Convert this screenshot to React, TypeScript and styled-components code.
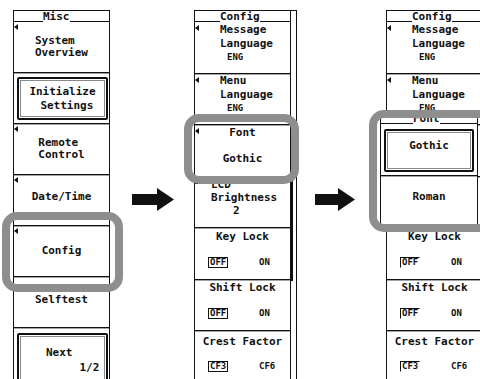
import React from "react";
import styled, { createGlobalStyle } from "styled-components";

const GlobalStyle = createGlobalStyle`
  html, body {
    margin: 0;
    padding: 0;
    background: #fff;
    overflow: hidden;
  }
`;

const Page = styled.div`
  display: flex;
  align-items: flex-start;
  width: 480px;
  height: 379px;
  padding-top: 10px;
  box-sizing: border-box;
  overflow: hidden;
  font-family: "DejaVu Sans Mono", "Liberation Mono", monospace;
  font-weight: bold;
  color: #111;
`;

const Column = styled.div<{ $ml: number }>`
  display: flex;
  flex-shrink: 0;
  margin-left: ${(p) => p.$ml}px;
`;

const Panel = styled.div`
  position: relative;
  width: 97px;
  height: 369px;
  flex-shrink: 0;
  box-sizing: border-box;
  border-left: 1px solid #111;
  border-right: 1px solid #111;
  display: flex;
  flex-direction: column;
`;

const Strip = styled.div`
  width: 6px;
  height: 369px;
  box-sizing: border-box;
  border-top: 1px solid #111;
  border-right: 1px solid #111;
  display: flex;
  flex-direction: column;
`;

const Thumb = styled.div<{ $top: number; $h: number }>`
  margin-top: ${(p) => p.$top}px;
  height: ${(p) => p.$h}px;
  width: 2px;
  background: #111;
`;

const HeaderBar = styled.div`
  height: 12px;
  flex-shrink: 0;
  box-sizing: border-box;
  border-top: 1px solid #111;
  display: flex;
  align-items: flex-end;
`;

const Rule = styled.div<{ $w?: number }>`
  ${(p) => (p.$w ? `width: ${p.$w}px;` : "flex: 1;")}
  border-bottom: 1px solid #111;
`;

const HeaderText = styled.div`
  font-size: 11px;
  line-height: 11px;
  white-space: pre;
`;

const Header: React.FC<{ lead: number; children: React.ReactNode }> = ({ lead, children }) => (
  <HeaderBar>
    <Rule $w={lead} />
    <HeaderText>{children}</HeaderText>
    <Rule />
  </HeaderBar>
);

const Item = styled.div<{ $h: number; $top?: boolean; $pad?: string; $last?: boolean }>`
  position: relative;
  height: ${(p) => p.$h}px;
  flex-shrink: 0;
  box-sizing: border-box;
  ${(p) => (p.$last ? "" : "border-bottom: 1px solid #111; box-shadow: 0 1px 0 #a4a4a4;")}
  display: flex;
  flex-direction: column;
  justify-content: ${(p) => (p.$top ? "flex-start" : "center")};
  padding: ${(p) => p.$pad ?? "0"};
`;

const Block = styled.div<{ $pl?: number }>`
  display: flex;
  flex-direction: column;
  align-self: ${(p) => (p.$pl !== undefined ? "flex-start" : "center")};
  padding-left: ${(p) => p.$pl ?? 0}px;
`;

const Line = styled.div<{ $lh?: number; $indent?: number; $align?: string; $mt?: number }>`
  font-size: 11px;
  line-height: ${(p) => p.$lh ?? 13}px;
  white-space: pre;
  text-align: ${(p) => p.$align ?? "left"};
  padding-left: ${(p) => p.$indent ?? 0}px;
  margin-top: ${(p) => p.$mt ?? 0}px;
`;

const Value = styled.span`
  font-size: 9px;
`;

const Pointer = styled.span<{ $top?: number }>`
  position: absolute;
  left: 0;
  top: ${(p) => p.$top ?? 2}px;
  width: 0;
  height: 0;
  border-top: 3.5px solid transparent;
  border-bottom: 3.5px solid transparent;
  border-right: 4px solid #111;
`;

const Knob = styled.svg`
  position: absolute;
  left: 0;
  top: 0;
`;

const Button = styled.div<{ $h?: number; $pt?: number }>`
  ${(p) => (p.$h ? `height: ${p.$h}px; flex: none;` : "flex: 1;")}
  box-sizing: border-box;
  border: 2px solid #111;
  border-radius: 2px;
  box-shadow: inset 0 0 0 1px #fff, inset 0 0 0 2px #8a8a8a;
  display: flex;
  flex-direction: column;
  justify-content: ${(p) => (p.$pt !== undefined ? "flex-start" : "center")};
  padding-top: ${(p) => p.$pt ?? 0}px;
`;

const ToggleRow = styled.div<{ $mt: number }>`
  display: grid;
  grid-template-columns: 51px auto;
  align-items: center;
  padding-left: 13px;
  margin-top: ${(p) => p.$mt}px;
`;

const Mark = styled.span<{ $flat?: boolean }>`
  justify-self: start;
  font-size: 9px;
  line-height: 9px;
  padding: 0 1px 0 1px;
  border: 1px solid ${(p) => (p.$flat ? "transparent" : "#111")};
  ${(p) => (p.$flat ? "border-top-color: #111; border-left-color: #111;" : "")}
`;

const Plain = styled.span`
  font-size: 9px;
  line-height: 9px;
`;

const Highlight = styled.div<{ $x: number; $y: number; $w: number; $h: number }>`
  position: absolute;
  left: ${(p) => p.$x}px;
  top: ${(p) => p.$y}px;
  width: ${(p) => p.$w}px;
  height: ${(p) => p.$h}px;
  box-sizing: border-box;
  border: 8px solid #8e8e8e;
  border-radius: 15px;
  pointer-events: none;
  z-index: 3;
`;

const SubMenu = styled.div`
  position: absolute;
  left: -7px;
  top: 102px;
  width: 98px;
  height: 114px;
  box-sizing: border-box;
  background: #fff;
  border-left: 1px solid #111;
  border-right: 1px solid #111;
  border-bottom: 1px solid #111;
  display: flex;
  flex-direction: column;
  z-index: 2;
`;

const ArrowBox = styled.div<{ $ml: number }>`
  flex-shrink: 0;
  margin-left: ${(p) => p.$ml}px;
  margin-top: 178px;
  line-height: 0;
`;

const Arrow: React.FC<{ ml: number; w: number }> = ({ ml, w }) => (
  <ArrowBox $ml={ml}>
    <svg width={w} height={23} viewBox={`0 0 ${w} 23`}>
      <path d={`M0 6H${w - 17}V0L${w} 11.5L${w - 17} 23V17H0Z`} fill="#111" />
    </svg>
  </ArrowBox>
);

const Toggle: React.FC<{ a: string; b: string; mt: number; flat?: boolean }> = ({ a, b, mt, flat }) => (
  <ToggleRow $mt={mt}>
    <Mark $flat={flat}>{a}</Mark>
    <Plain>{b}</Plain>
  </ToggleRow>
);

const MiscMenu = () => (
  <Panel>
    <Header lead={29}>Misc</Header>
    <Item $h={51}>
      <Pointer />
      <Block>
        <Line $lh={12}>System</Line>
        <Line $lh={12}>Overview</Line>
      </Block>
    </Item>
    <Item $h={51} $pad="4px 1px 3px 3px">
      <Button>
        <Block>
          <Line $lh={14}>Initialize</Line>
          <Line $lh={14} $indent={11}>Settings</Line>
        </Block>
      </Button>
    </Item>
    <Item $h={51}>
      <Pointer />
      <Block>
        <Line $lh={12}>Remote</Line>
        <Line $lh={12}>Control</Line>
      </Block>
    </Item>
    <Item $h={51} $pad="0 0 7px">
      <Pointer />
      <Line $align="center">Date/Time</Line>
    </Item>
    <Item $h={51} $pad="0 0 2px">
      <Pointer />
      <Line $align="center">Config</Line>
    </Item>
    <Item $h={51} $pad="0 0 6px">
      <Line $align="center">Selftest</Line>
    </Item>
    <Item $h={51} $top $last $pad="5px 1px 0 3px">
      <Button $h={60} $pt={11}>
        <Line $align="center">{"Next "}</Line>
        <Line $align="right" $mt={2}>
          {"1/2 "}
        </Line>
      </Button>
    </Item>
    <Highlight $x={-12} $y={202} $w={121} $h={80} />
  </Panel>
);

const ConfigMenu: React.FC<{ popup?: boolean }> = ({ popup }) => (
  <Panel>
    <Header lead={25}>Config</Header>
    <Item $h={52} $top $pad="1px 0 0">
      <Pointer $top={3} />
      <Block $pl={25}>
        <Line $lh={13.5}>Message</Line>
        <Line $lh={13.5}>Language</Line>
        <Line $lh={13.5} $indent={7}>
          <Value>ENG</Value>
        </Line>
      </Block>
    </Item>
    <Item $h={51} $top $pad="0 0 0">
      <Pointer $top={3} />
      <Block $pl={25}>
        <Line $lh={13.5}>Menu</Line>
        <Line $lh={13.5}>Language</Line>
        <Line $lh={13.5} $indent={7}>
          <Value>ENG</Value>
        </Line>
      </Block>
    </Item>
    {popup ? (
      <>
        <Item $h={52} />
        <Item $h={51} />
      </>
    ) : (
      <>
        <Item $h={52} $top $pad="1px 0 0">
          <Pointer $top={3} />
          <Line $align="center">Font</Line>
          <Line $align="center" $mt={13}>
            Gothic
          </Line>
        </Item>
        <Item $h={51} $top $pad="1px 0 0">
          <Knob width={11} height={7} viewBox="0 0 11 7">
            <path d="M0 0H11V7H0Z" fill="#111" />
            <path d="M2.5 6L5.5 1.5L8.5 6Z" fill="#fff" />
          </Knob>
          <Block $pl={16}>
            <Line $lh={13}>LCD</Line>
            <Line $lh={13}>Brightness</Line>
            <Line $lh={13} $indent={22}>
              2
            </Line>
          </Block>
        </Item>
      </>
    )}
    <Item $h={52} $top $pad="2px 0 0">
      <Line $align="center">Key Lock</Line>
      <Toggle a="OFF" b="ON" mt={14} flat={popup} />
    </Item>
    <Item $h={51} $top $pad="1px 0 0">
      <Line $align="center">Shift Lock</Line>
      <Toggle a="OFF" b="ON" mt={14} flat={popup} />
    </Item>
    <Item $h={60} $top $last $pad="4px 0 0">
      <Line $align="center">Crest Factor</Line>
      <Toggle a="CF3" b="CF6" mt={13} flat={popup} />
    </Item>
    {popup ? (
      <>
        <SubMenu>
          <Header lead={32}>Font</Header>
          <Item $h={52} $pad="5px 3px 3px 3px">
            <Button $pt={8}>
              <Line $align="center">Gothic</Line>
            </Button>
          </Item>
          <Item $h={49} $last $pad="0 0 8px">
            <Line $align="center">Roman</Line>
          </Item>
        </SubMenu>
        <Highlight $x={-18} $y={100} $w={130} $h={122} />
      </>
    ) : (
      <Highlight $x={-11} $y={104} $w={115} $h={70} />
    )}
  </Panel>
);

export default function App() {
  return (
    <Page>
      <GlobalStyle />
      <Column $ml={13}>
        <MiscMenu />
      </Column>
      <Arrow ml={22} w={42} />
      <Column $ml={20}>
        <ConfigMenu />
        <Strip>
          <Thumb $top={165} $h={105} />
        </Strip>
      </Column>
      <Arrow ml={18} w={40} />
      <Column $ml={31}>
        <ConfigMenu popup />
        <Strip>
          <Thumb $top={165} $h={105} />
        </Strip>
      </Column>
    </Page>
  );
}
